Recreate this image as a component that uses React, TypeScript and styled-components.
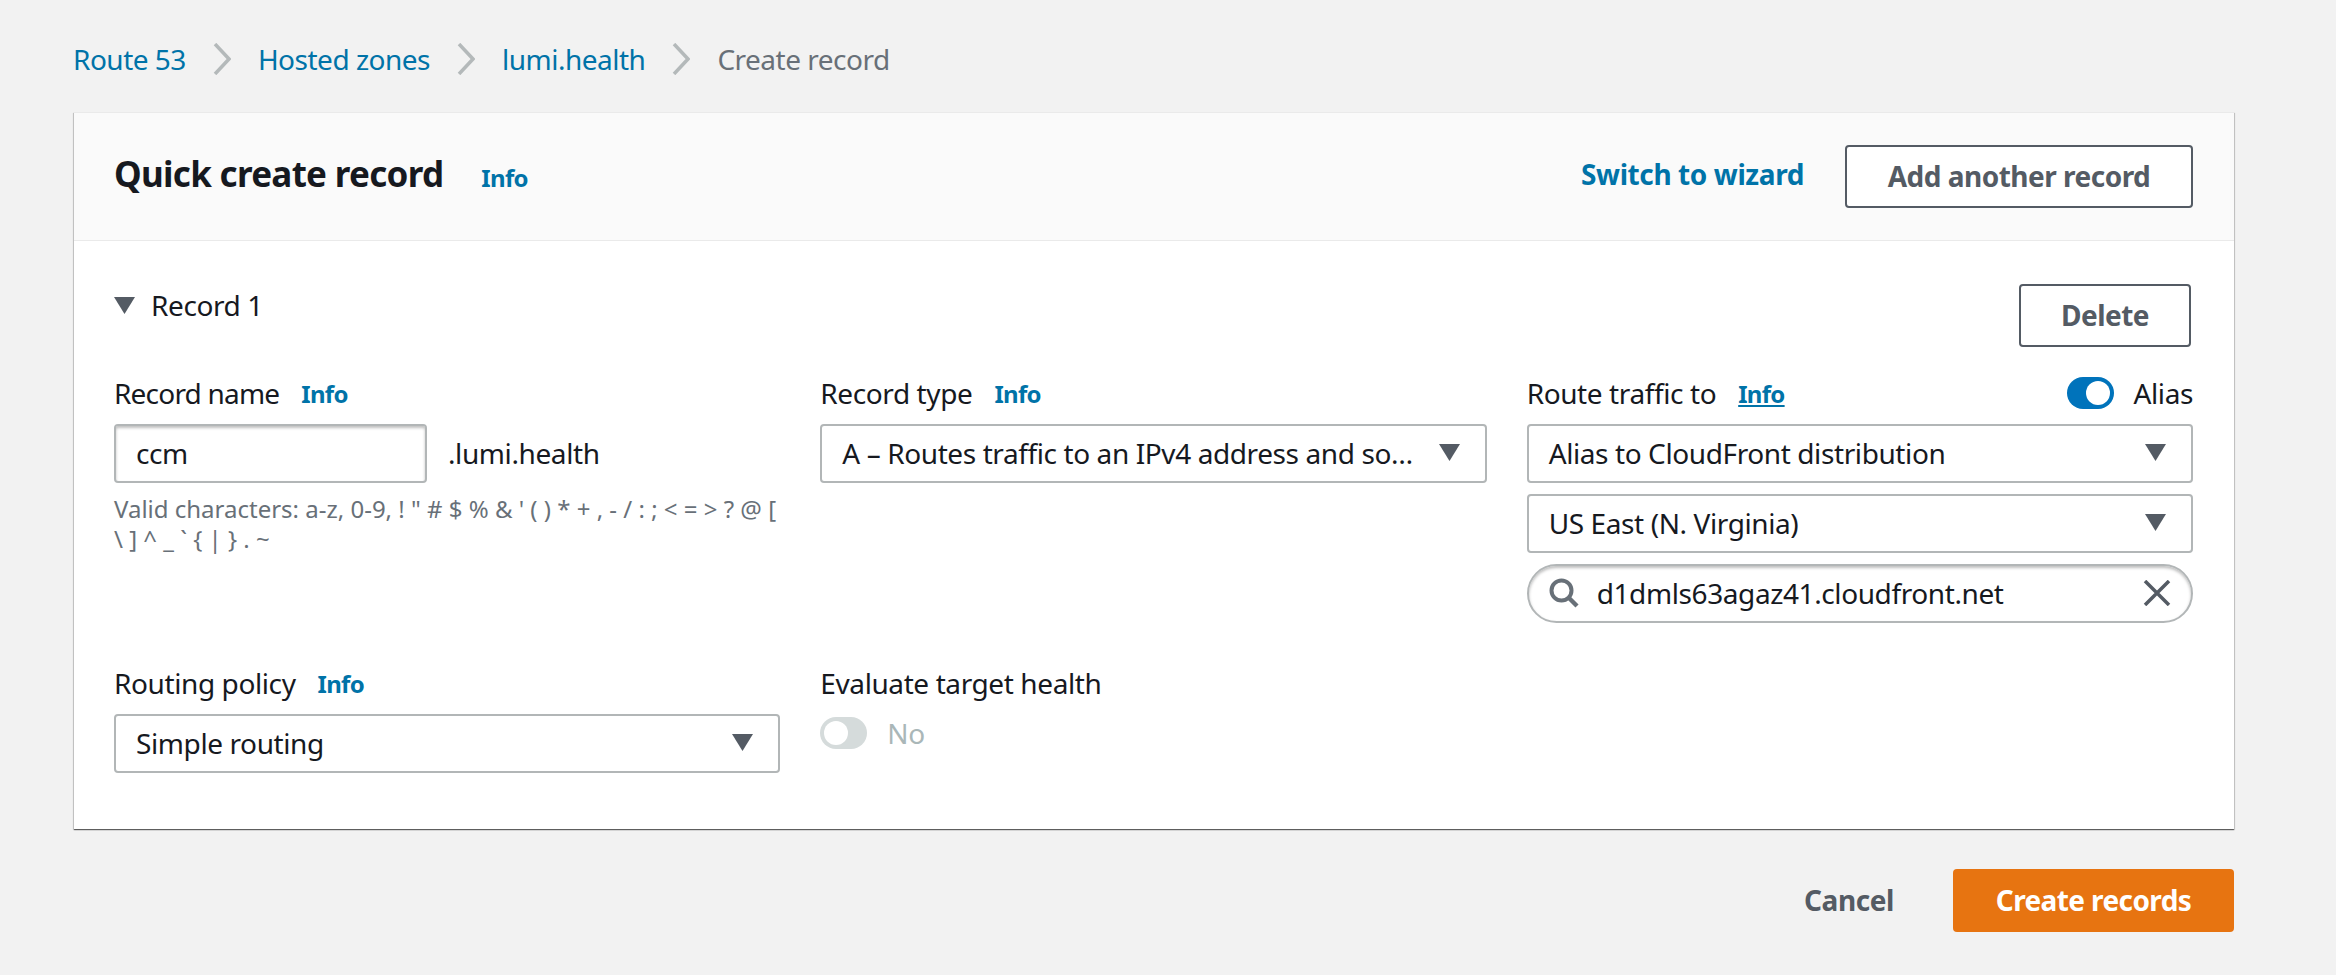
import React from "react";
import styled, { createGlobalStyle } from "styled-components";

const Global = createGlobalStyle`
  html, body { margin: 0; padding: 0; background: #f2f2f2; }
  body { font-family: "Noto Sans", "Liberation Sans", sans-serif; color: #16191f; font-size: 28px; letter-spacing: -0.4px; }
`;
const Page = styled.div`
  width: 2336px; height: 975px; box-sizing: border-box; padding: 0 102px 0 73px; overflow: hidden;
`;
const Crumbs = styled.nav`
  height: 112px; padding-top: 6px; box-sizing: border-box; display: flex; align-items: center;
  font-size: 28px; letter-spacing: -0.5px;
`;
const CrumbLink = styled.a` color: #0073a8; `;
const CrumbCurrent = styled.span` color: #687078; `;
const Chevron = styled.svg` width: 18px; height: 32px; margin: 0 27px; flex: none; `;
const Card = styled.section`
  margin-left: 1px; background: #fff;
  box-shadow: 0 1px 1px 0 rgba(0,0,0,.5), 1px 1px 1px 0 rgba(0,0,0,.12), -1px 1px 1px 0 rgba(0,0,0,.12);
  border-top: 1px solid #eaeaea;
`;
const CardHeader = styled.header`
  height: 128px; box-sizing: border-box; background: #fafafa; border-bottom: 1px solid #eaeaea;
  display: flex; align-items: center; padding: 0 41px 0 40px;
`;
const Title = styled.h1` margin: 0 38px 0 0; font-size: 35px; font-weight: 700; letter-spacing: -0.7px; line-height: 44px; position: relative; top: -3px; `;
const Info = styled.a<{ $under?: boolean }>`
  color: #0073a8; font-size: 24px; font-weight: 700; line-height: 32px; letter-spacing: -0.7px; padding-top: 2px;
  text-decoration: ${p => (p.$under ? "underline" : "none")};
`;
const Spacer = styled.div` flex: 1; `;
const WizardLink = styled.a` color: #0073a8; font-size: 28px; font-weight: 700; margin-right: 41px; position: relative; top: -3px; `;
const OutlineButton = styled.button<{ $w: number }>`
  width: ${p => p.$w}px; height: 63px; box-sizing: border-box; background: #fff; border: 2px solid #545b64; border-radius: 4px;
  color: #545b64; font: 700 28px "Noto Sans", sans-serif; letter-spacing: -0.5px; padding: 0 0 2px;
`;
const Body = styled.div` padding: 43px 41px 45px 40px; `;
const RecordRow = styled.div` display: flex; justify-content: space-between; align-items: flex-start; padding-right: 2px; margin-bottom: 27px; `;
const RecordToggle = styled.div` display: flex; align-items: center; height: 42px; gap: 16px; font-size: 28px; `;
const Caret = styled.svg` width: 21px; height: 17px; flex: none; `;
const Grid = styled.div` display: grid; grid-template-columns: repeat(3, 1fr); column-gap: 40px; `;
const Col = styled.div` min-width: 0; display: flex; flex-direction: column; `;
const LabelRow = styled.div<{ $tight?: boolean }>`
  height: 38px; margin-bottom: 12px; display: flex; align-items: center; gap: 22px; font-size: 28px; line-height: 38px;
  letter-spacing: ${p => (p.$tight ? "-0.8px" : "-0.4px")};
`;
const Input = styled.div<{ $w?: number }>`
  width: ${p => (p.$w ? `${p.$w}px` : "100%")}; height: 59px; box-sizing: border-box; background: #fff; border: 2px solid #b2b6b7; border-radius: 4px;
  box-shadow: inset 0 2px 3px rgba(0,0,0,.25); display: flex; align-items: center; padding: 0 20px 2px; font-size: 28px; white-space: nowrap;
`;
const InputRow = styled.div` display: flex; align-items: center; gap: 21px; `;
const Suffix = styled.span` font-size: 28px; position: relative; top: -1px; `;
const Hint = styled.div` font-size: 24px; line-height: 30px; color: #687078; margin-top: 11px; letter-spacing: 0; `;
const Select = styled.div`
  height: 59px; box-sizing: border-box; background: #fff; border: 2px solid #b2b6b7; border-radius: 4px; display: flex; align-items: center;
  padding: 0 25px 2px 20px; gap: 24px; font-size: 28px; margin-bottom: 11px;
`;
const SelectText = styled.span` flex: 1; min-width: 0; white-space: nowrap; `;
const Search = styled.div`
  height: 59px; box-sizing: border-box; background: #fff; border: 2px solid #b2b6b7; border-radius: 30px; display: flex; align-items: center;
  box-shadow: inset 0 2px 3px rgba(0,0,0,.25); padding: 0 20px 2px 20px; font-size: 28px;
`;
const SearchText = styled.span` flex: 1; margin-left: 18px; `;
const Icon = styled.svg` flex: none; `;
const LabelEnd = styled.div` margin-left: auto; display: flex; align-items: center; gap: 20px; `;
const Switch = styled.div<{ $on: boolean }>`
  width: 47px; height: 32px; border-radius: 16px; box-sizing: border-box; padding: 4px; display: flex; flex: none;
  justify-content: ${p => (p.$on ? "flex-end" : "flex-start")}; background: ${p => (p.$on ? "#0073bb" : "#d5dbdb")};
  &::after { content: ""; width: 24px; height: 24px; border-radius: 50%; background: #fff; }
`;
const SwitchRow = styled.div` display: flex; align-items: center; gap: 20px; margin-top: 0; color: #aab7b8; font-size: 28px; `;
const Row2 = styled(Grid)` margin-top: 41px; `;
const Footer = styled.footer` display: flex; justify-content: flex-end; align-items: center; padding-top: 40px; gap: 59px; `;
const Cancel = styled.button` background: none; border: 0; padding: 0 0 2px; color: #545b64; font: 700 28px "Noto Sans", sans-serif; letter-spacing: -0.4px; `;
const Primary = styled.button` width: 281px; height: 63px; background: #e77411; border: 0; border-radius: 4px; color: #fff; font: 700 28px "Noto Sans", sans-serif; letter-spacing: -0.6px; padding: 0 0 2px; `;

const Chev = () => (
  <Chevron viewBox="0 0 18 32"><path d="M2 1 L16 16 L2 31" fill="none" stroke="#b4b9ba" strokeWidth="3.5" /></Chevron>
);
const Tri = () => (
  <Caret viewBox="0 0 21 17"><path d="M0 0 H21 L10.5 17 Z" fill="#545b64" /></Caret>
);
const HINT = "Valid characters: a-z, 0-9, ! \" # $ % & ' ( ) * + , - / : ; < = > ? @ [ \\ ] ^ _ ` { | } . ~";

export default function App() {
  return (
    <Page>
      <Global />
      <Crumbs>
        <CrumbLink>Route 53</CrumbLink><Chev />
        <CrumbLink>Hosted zones</CrumbLink><Chev />
        <CrumbLink>lumi.health</CrumbLink><Chev />
        <CrumbCurrent>Create record</CrumbCurrent>
      </Crumbs>
      <Card>
        <CardHeader>
          <Title>Quick create record</Title>
          <Info>Info</Info>
          <Spacer />
          <WizardLink>Switch to wizard</WizardLink>
          <OutlineButton $w={348}>Add another record</OutlineButton>
        </CardHeader>
        <Body>
          <RecordRow>
            <RecordToggle><Tri />Record 1</RecordToggle>
            <OutlineButton $w={172}>Delete</OutlineButton>
          </RecordRow>
          <Grid>
            <Col>
              <LabelRow $tight>Record name <Info>Info</Info></LabelRow>
              <InputRow>
                <Input $w={313}>ccm</Input>
                <Suffix>.lumi.health</Suffix>
              </InputRow>
              <Hint>{HINT}</Hint>
            </Col>
            <Col>
              <LabelRow>Record type <Info>Info</Info></LabelRow>
              <Select><SelectText>A – Routes traffic to an IPv4 address and so…</SelectText><Tri /></Select>
            </Col>
            <Col>
              <LabelRow>
                Route traffic to <Info $under>Info</Info>
                <LabelEnd><Switch $on />Alias</LabelEnd>
              </LabelRow>
              <Select><SelectText>Alias to CloudFront distribution</SelectText><Tri /></Select>
              <Select><SelectText>US East (N. Virginia)</SelectText><Tri /></Select>
              <Search>
                <Icon width="30" height="30" viewBox="0 0 30 30"><circle cx="12.5" cy="12.5" r="10" fill="none" stroke="#687078" strokeWidth="4" /><path d="M20 20 L28 28" stroke="#687078" strokeWidth="4.5" /></Icon>
                <SearchText>d1dmls63agaz41.cloudfront.net</SearchText>
                <Icon width="28" height="26" viewBox="0 0 28 26"><path d="M2 1 L26 25 M26 1 L2 25" stroke="#545b64" strokeWidth="3.5" /></Icon>
              </Search>
            </Col>
          </Grid>
          <Row2>
            <Col>
              <LabelRow>Routing policy <Info>Info</Info></LabelRow>
              <Select><SelectText>Simple routing</SelectText><Tri /></Select>
            </Col>
            <Col>
              <LabelRow>Evaluate target health</LabelRow>
              <SwitchRow><Switch $on={false} />No</SwitchRow>
            </Col>
          </Row2>
        </Body>
      </Card>
      <Footer>
        <Cancel>Cancel</Cancel>
        <Primary>Create records</Primary>
      </Footer>
    </Page>
  );
}
